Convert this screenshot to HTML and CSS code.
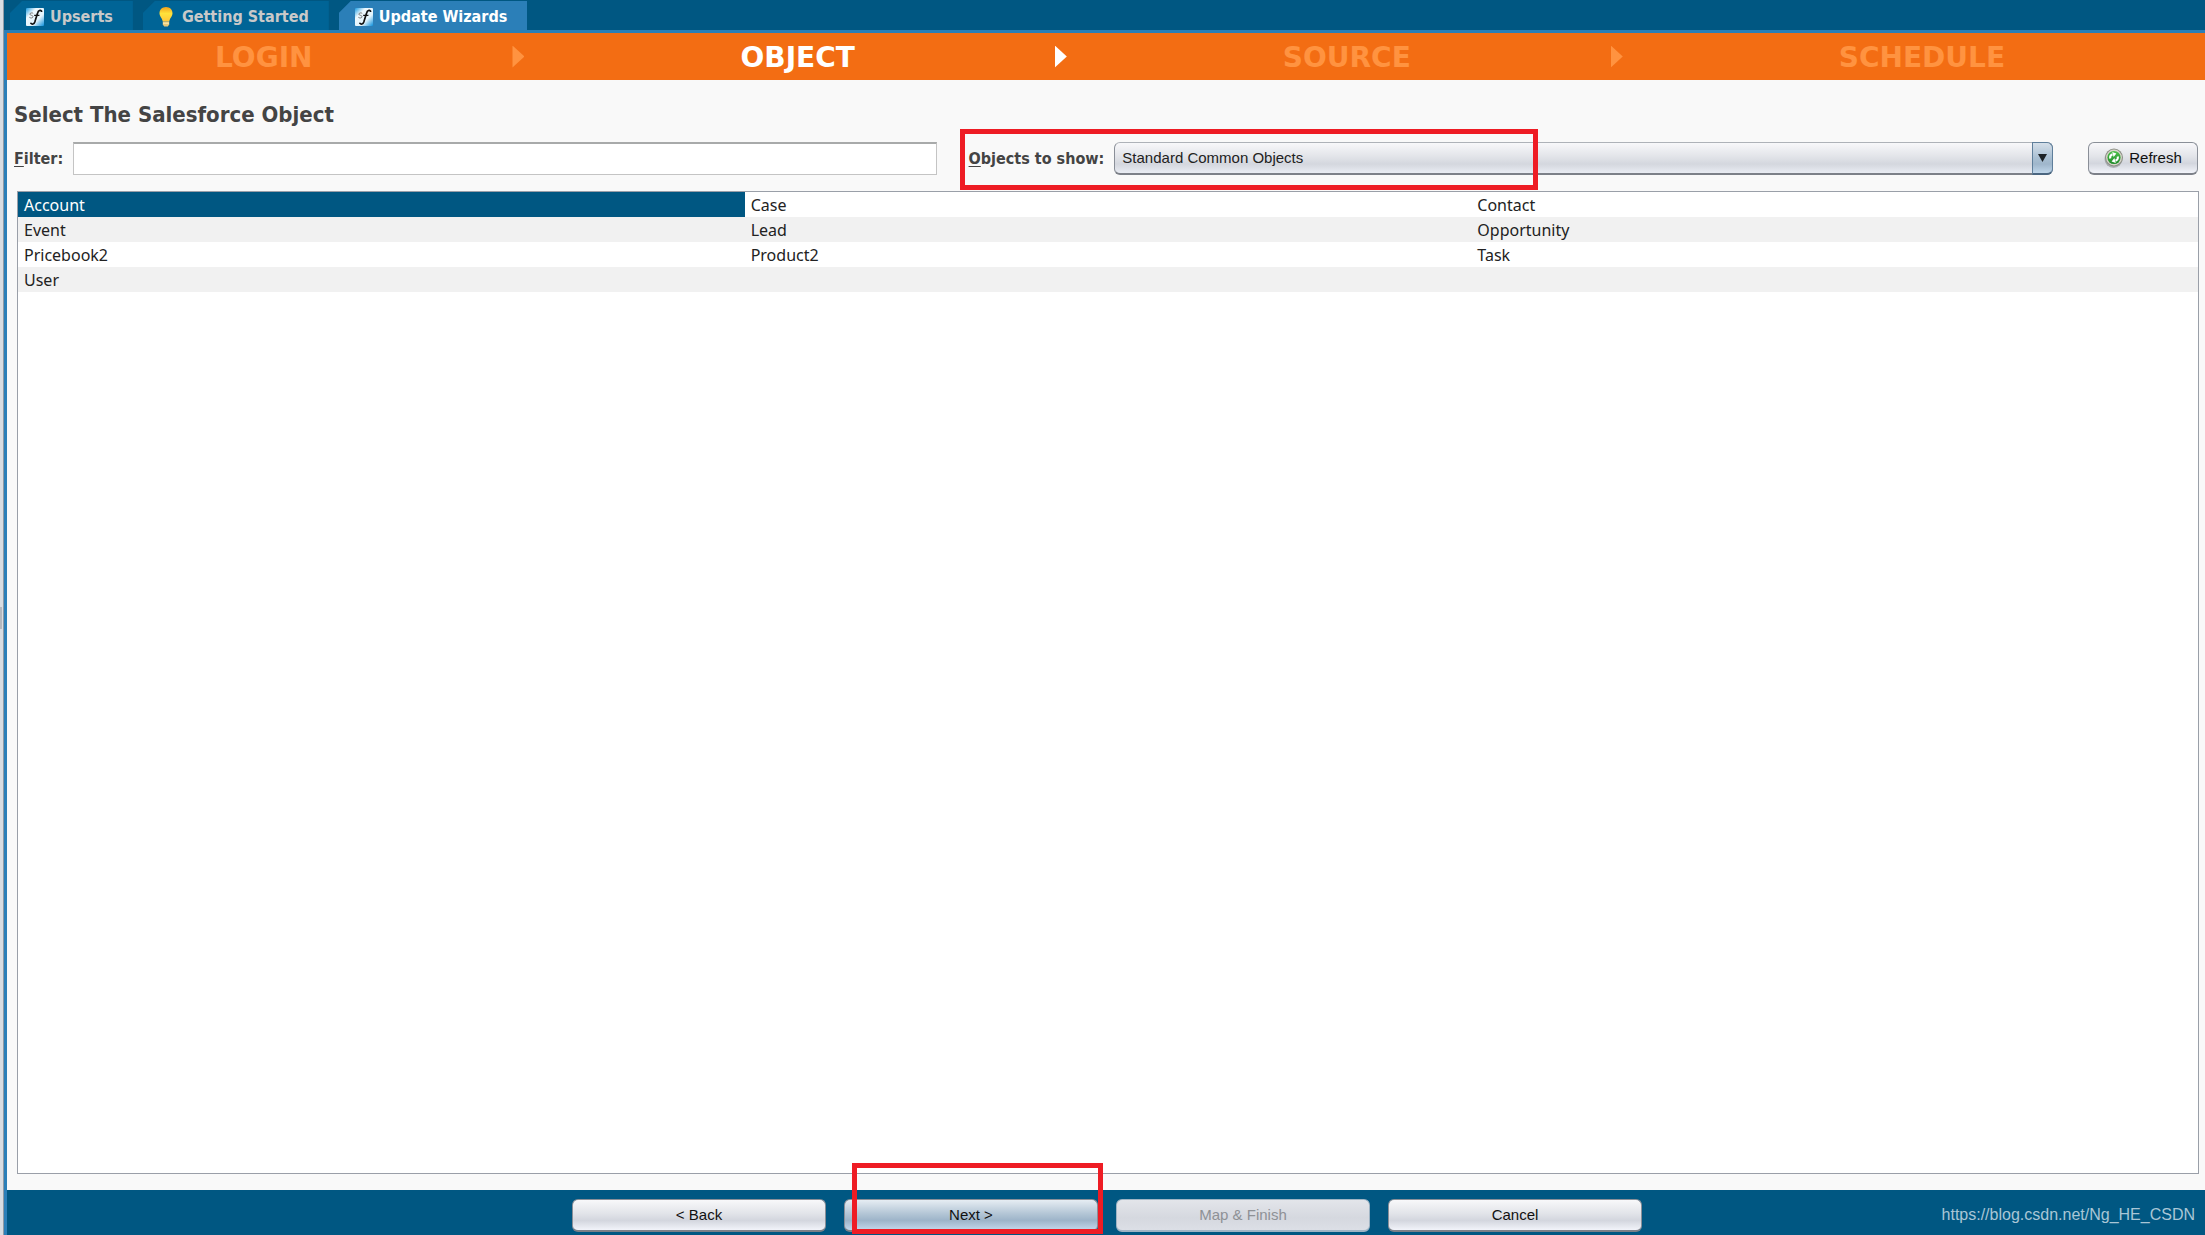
FILE: index.html
```html
<!DOCTYPE html>
<html lang="en">
<head>
<meta charset="utf-8">
<title>Update Wizards</title>
<link rel="stylesheet" href="styles.css">
</head>
<body>
<svg class="defs" aria-hidden="true">
  <defs>
    <linearGradient id="sky" x1="0" y1="0" x2="1" y2="1">
      <stop offset="0" stop-color="#1c9be0"/><stop offset=".3" stop-color="#eef8fd"/><stop offset=".65" stop-color="#e4f4fc"/><stop offset="1" stop-color="#0c8fdc"/>
    </linearGradient>
    <linearGradient id="glow" x1="0" y1="0" x2="0" y2="1">
      <stop offset="0" stop-color="#f2a11c"/><stop offset=".45" stop-color="#ffe23a"/><stop offset="1" stop-color="#ffc63a"/>
    </linearGradient>
    <linearGradient id="leaf" x1="0" y1="0" x2="0" y2="1">
      <stop offset="0" stop-color="#4fc24a"/><stop offset="1" stop-color="#1f8a2a"/>
    </linearGradient>
    <symbol id="sf" viewBox="0 0 18 18">
      <rect width="18" height="18" rx="1" fill="url(#sky)"/>
      <path d="M7.2 5.4C6.6 4.7 3.9 4.6 3.9 6.2C3.9 7.6 7 7 7 8.7C7 10.3 4.2 10.2 3.4 9.3" fill="none" stroke="#777" stroke-width="1"/>
      <path d="M15.6 3.2C14.4 1.6 12.4 2.2 11.6 5L8.8 14C8 16.2 6 16.6 4.9 15.3" fill="none" stroke="#111" stroke-width="1.7" stroke-linecap="round"/>
      <path d="M8.2 7.4H13.4" stroke="#111" stroke-width="1.2"/>
    </symbol>
  </defs>
</svg>

<div class="gutter"><span class="gutter-grip"></span></div>

<div class="app">
  <nav class="tabs" aria-label="Documents">
    <button class="tab" type="button"><svg class="tab-icon"><use href="#sf"/></svg>Upserts</button>
    <button class="tab tab-help" type="button">
      <svg class="tab-icon bulb" viewBox="0 0 14 20">
        <path d="M7 0C3 0 .5 2.8 .5 6.2C.5 9.2 3 10.8 3.8 14.5H10.2C11 10.8 13.5 9.2 13.5 6.2C13.5 2.8 11 0 7 0Z" fill="url(#glow)"/>
        <path d="M3.8 14.5H10.2V17.5L8.8 19.5H5.2L3.8 17.5Z" fill="#e8c878"/>
        <path d="M4 16.2H10" stroke="#fff0b8" stroke-width="1"/>
      </svg>Getting Started</button>
    <button class="tab tab-active" type="button"><svg class="tab-icon"><use href="#sf"/></svg>Update Wizards</button>
  </nav>

  <ol class="steps">
    <li class="step">LOGIN</li>
    <li class="arrow" aria-hidden="true"></li>
    <li class="step current" aria-current="step">OBJECT</li>
    <li class="arrow current" aria-hidden="true"></li>
    <li class="step">SOURCE</li>
    <li class="arrow" aria-hidden="true"></li>
    <li class="step">SCHEDULE</li>
  </ol>

  <main class="content">
    <h1 class="title">Select The Salesforce Object</h1>
    <div class="controls">
      <div class="field field-filter">
        <label class="label" for="filter"><u>F</u>ilter:</label>
        <input class="text-box" id="filter" type="text">
      </div>
      <div class="field field-objects">
        <label class="label" for="objects"><u>O</u>bjects to show:</label>
        <div class="combo">
          <select class="combo-box" id="objects"><option>Standard Common Objects</option></select>
          <span class="combo-arrow"></span>
        </div>
        <span class="mark mark-objects"></span>
      </div>
      <button class="button refresh" type="button">
        <svg class="refresh-icon" viewBox="0 0 20 20">
          <circle cx="9.5" cy="11" r="9" fill="#000" opacity=".22"/>
          <circle cx="10" cy="9.5" r="9" fill="#8d9086"/>
          <circle cx="10" cy="9.5" r="7.9" fill="#d9d6cc"/>
          <circle cx="10" cy="9.5" r="6.6" fill="url(#leaf)"/>
          <path d="M6.2 10.5A3.8 3.8 0 0 1 8.5 6.2M13.8 8.5A3.8 3.8 0 0 1 11.5 12.8" fill="none" stroke="#fff" stroke-width="2"/>
          <path d="M8.2 4L12.4 5.6L9.6 9ZM11.8 15L7.6 13.4L10.4 10Z" fill="#fff"/>
        </svg>Refresh</button>
    </div>
    <div class="list">
      <table class="objects">
        <tbody>
          <tr><td class="selected">Account</td><td>Case</td><td>Contact</td></tr>
          <tr><td>Event</td><td>Lead</td><td>Opportunity</td></tr>
          <tr><td>Pricebook2</td><td>Product2</td><td>Task</td></tr>
          <tr><td>User</td><td></td><td></td></tr>
        </tbody>
      </table>
    </div>
  </main>

  <footer class="footer">
    <button class="button wide" type="button">&lt; Back</button>
    <div class="next">
      <button class="button wide primary" type="button">Next &gt;</button>
      <span class="mark mark-next"></span>
    </div>
    <button class="button wide" type="button" disabled>Map &amp; Finish</button>
    <button class="button wide" type="button">Cancel</button>
    <span class="watermark">https://blog.csdn.net/Ng_HE_CSDN</span>
  </footer>
</div>
</body>
</html>
```
FILE: styles.css
```css
* { box-sizing: border-box; }

body {
  margin: 0;
  min-height: 100vh;
  display: flex;
  background: #f9f9f9;
  color: #222;
  font: 16px/23px "Noto Sans", sans-serif;
}

.defs { position: absolute; width: 0; height: 0; }

/* Window edge left of the application */
.gutter {
  width: 4px;
  flex: none;
  display: flex;
  flex-direction: column;
  justify-content: center;
  background: #d9dde2;
  border-right: 1px solid #8f9aa5;
}
.gutter-grip { height: 22px; width: 2px; background: #b4b8be; }

.app {
  flex: 1;
  min-width: 0;
  display: flex;
  flex-direction: column;
  border-left: 3px solid #2b7fb8;
}

/* Tabs */
.tabs {
  display: flex;
  align-items: flex-end;
  gap: 10px;
  height: 33px;
  margin-left: -3px;
  padding-left: 6px;
  background: #005782;
  border-bottom: 3px solid #2b7fb8;
}
.tab {
  display: flex;
  align-items: center;
  gap: 6px;
  height: 29px;
  padding: 2px 20px 0 16px;
  border: 0;
  background: #006496;
  color: #c9c9c9;
  clip-path: polygon(0 12px, 12px 0, 100% 0, 100% 100%, 0 100%);
  font: bold 16px/20px "DejaVu Sans Condensed", "DejaVu Sans", sans-serif;
  white-space: nowrap;
}
.tab-active { background: #2b7fb8; color: #fff; }
.tab-icon { width: 18px; height: 18px; flex: none; }
.bulb { width: 14px; height: 20px; }
.tab-help { gap: 9px; }

/* Wizard steps */
.steps {
  display: flex;
  align-items: center;
  height: 47px;
  margin: 0;
  padding: 0;
  list-style: none;
  background: #f36d13;
  color: #ff9340;
  font: bold 28px/40px "DejaVu Sans", sans-serif;
}
.step { flex: 1 1 auto; padding: 2px 0 0 16px; text-align: center; }
.step:first-child { padding-left: 8px; }
.steps .current { color: #fff; }
.arrow {
  width: 12px;
  height: 22px;
  background: currentColor;
  clip-path: polygon(0 0, 100% 50%, 0 100%);
}

/* Content */
.content {
  flex: 1;
  display: flex;
  flex-direction: column;
  padding: 21px 6px 16px 7px;
}
.title {
  margin: 0;
  color: #444;
  font: bold 22px/28px "DejaVu Sans Condensed", "DejaVu Sans", sans-serif;
}
.controls { display: flex; align-items: center; padding: 13px 1px 0 0; }
.field { display: flex; align-items: center; gap: 10px; }
.field-filter { flex: 12 1 60px; }
.field-objects { flex: 13 1 150px; position: relative; margin: 0 35px 0 32px; }
.label {
  color: #444;
  font: bold 16px/24px "DejaVu Sans Condensed", "DejaVu Sans", sans-serif;
  white-space: nowrap;
}
.label u { text-underline-offset: 2px; text-decoration-thickness: 1px; }
.text-box {
  flex: 1;
  min-width: 0;
  height: 33px;
  padding: 0 6px;
  border: 1px solid #c4c4c4;
  border-top: 2px solid #a8aaaa;
  background: #fff;
  font: inherit;
}
.combo { flex: 1; position: relative; }
.combo-box {
  appearance: none;
  display: block;
  width: 100%;
  height: 33px;
  padding: 0 30px 1px 7px;
  border: 1px solid #8a8f98;
  border-top-color: #aeb2b8;
  border-bottom: 2px solid #7c8088;
  border-radius: 6px;
  background: linear-gradient(#f8f8fa, #e2e4e9 45%, #d4d7de 70%, #e9ecf3);
  color: #222;
  font: 15px/20px "Liberation Sans", Arial, sans-serif;
}
.combo-arrow {
  position: absolute;
  inset: 0 0 0 auto;
  width: 21px;
  display: grid;
  place-items: center;
  border: 1px solid #5f7f9b;
  border-bottom: 2px solid #4b6680;
  border-radius: 0 6px 6px 0;
  background: linear-gradient(#d5dfe9, #a9bfd2 50%, #9fb6cb 70%, #bfd6ea);
  pointer-events: none;
}
.combo-arrow::before {
  content: "";
  width: 9px;
  height: 8px;
  background: #1d2226;
  clip-path: polygon(0 0, 100% 0, 50% 100%);
}

.button {
  display: flex;
  align-items: center;
  justify-content: center;
  height: 33px;
  padding: 0 0 1px;
  border: 1px solid #8a8f98;
  border-bottom: 2px solid #7c8088;
  border-radius: 6px;
  background: linear-gradient(#f8f8fa, #e2e4e9 45%, #d3d6de 68%, #f2f4fa);
  color: #111;
  font: 15px/20px "Liberation Sans", Arial, sans-serif;
}
.button.primary { background: linear-gradient(#e6edf3, #b4c6d6 45%, #9db4c9 68%, #c3d8ec); }
.button:disabled { background: linear-gradient(#e3e5ea, #d5d8df 60%, #dcdfe6); color: #8e9196; border-color: #9fb4c4; }
.button.refresh { width: 110px; gap: 5px; }
.refresh-icon { width: 20px; height: 20px; }

.list {
  flex: 1;
  margin: 16px 0 0 3px;
  border: 1px solid #9a9fa8;
  background: #fff;
}
.objects { width: 100%; table-layout: fixed; border-collapse: collapse; }
.objects td { height: 25px; padding: 2px 6px 0; }
.objects tr:nth-child(even) { background: #f1f1f1; }
.objects .selected { background: #005782; color: #fff; }

/* Footer */
.footer {
  position: relative;
  display: flex;
  justify-content: center;
  gap: 18px;
  height: 45px;
  padding: 9px 0 0 2px;
  background: #005782;
}
.button.wide { width: 254px; }
.next { position: relative; }
.watermark {
  position: absolute;
  right: 10px;
  top: 14px;
  color: #a9c6d6;
  font: 16px/22px "Liberation Sans", Arial, sans-serif;
}

/* Red highlight frames */
.mark { position: absolute; border: 5px solid #ee1c24; pointer-events: none; }
.mark-objects { left: -9px; top: -13px; width: 578px; height: 61px; }
.mark-next { left: 8px; top: -36px; width: 251px; height: 71px; }
```
